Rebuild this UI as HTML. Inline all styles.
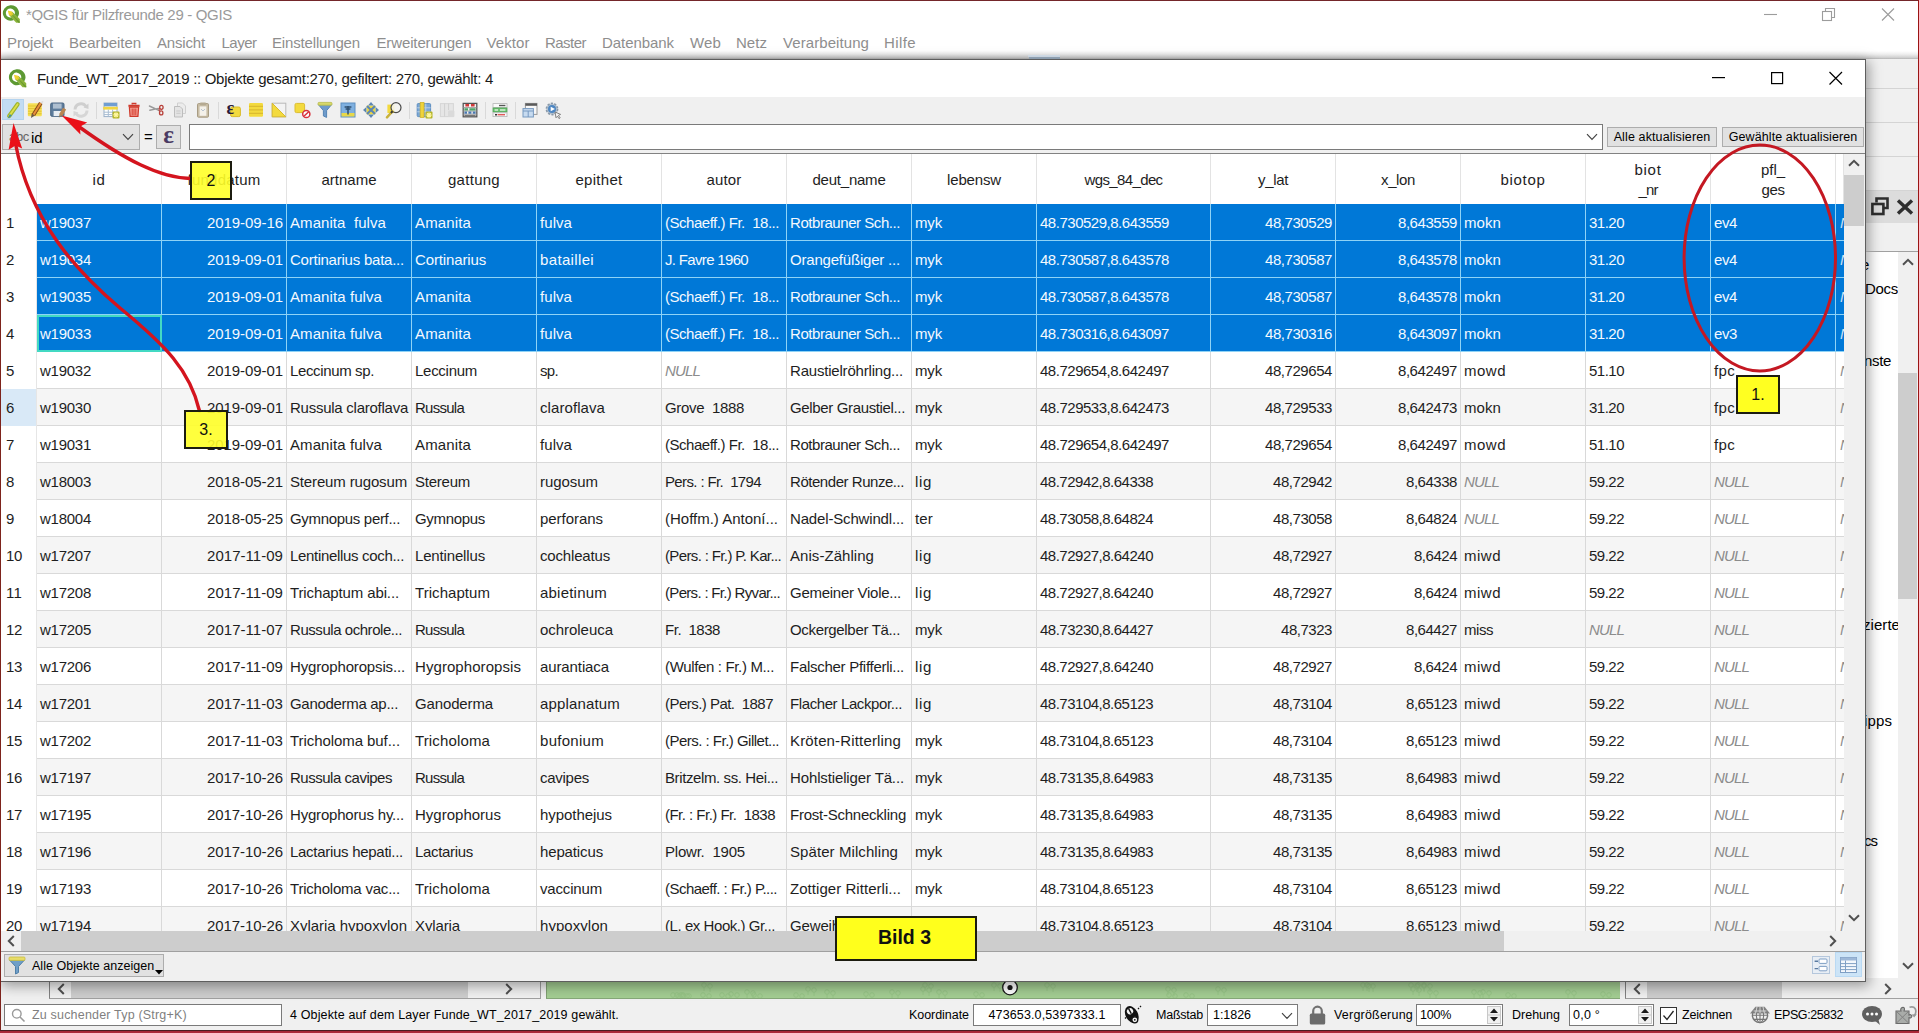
<!DOCTYPE html>
<html lang="de"><head><meta charset="utf-8"><title>QGIS Attributtabelle</title>
<style>
html,body{margin:0;padding:0}
body{width:1919px;height:1033px;position:relative;overflow:hidden;background:#fff;font-family:"Liberation Sans",sans-serif;font-size:15px;color:#000;line-height:1}
div,span{box-sizing:border-box}
.a{position:absolute}
/* main window */
#mtitle{letter-spacing:-0.320px;left:26px;top:6px;font-size:15px;color:#9a9a9a;white-space:nowrap;line-height:18px}
#menu span{position:absolute;top:34px;font-size:15px;color:#8e8e8e;white-space:nowrap;line-height:18px}
#menushadow{left:1px;top:51px;width:1917px;height:8px;background:linear-gradient(#fff,#eee 40%,#d2d2d2 80%,#b4b4b4)}
#mright{left:1866px;top:59px;width:52px;height:941px;background:#f0f0f0}
#mright .ln{left:0;width:52px;height:1px;background:#d4d4d4}
#dockhd{left:0;top:132px;width:52px;height:32px;background:#dcdcdc}
#dockpanel{left:0;top:192px;width:32px;height:727px;background:#fff;border-top:1px solid #a0a0a0;font-size:15px;overflow:hidden}
#dockpanel span{position:absolute;white-space:nowrap;line-height:18px}
#docksb{left:32px;top:193px;width:19px;height:726px;background:#f0f0f0}
#docksb .th{left:0;top:121px;width:19px;height:226px;background:#cdcdcd}
#mbottom{left:1px;top:982px;width:1917px;height:18px;background:#f0f0f0}
#lsb{left:48px;top:0;width:492px;height:17px;background:#f0f0f0;border-left:1px solid #828282;border-bottom:1px solid #a0a0a0;border-right:1px solid #a0a0a0}
#lsb .th{left:21px;top:0;width:397px;height:16px;background:#cdcdcd}
#map{left:545px;top:0;width:1074px;height:17px;background:#a3cd92;border-left:1px solid #7f9f72;border-bottom:1px solid #86a878}
#rsb{left:1624px;top:0;width:293px;height:17px;background:#f0f0f0;border-left:1px solid #828282;border-bottom:1px solid #a0a0a0}
#rsb .th{left:21px;top:0;width:135px;height:16px;background:#cdcdcd}
#status{left:1px;top:1000px;width:1917px;height:30px;background:#f0f0f0;font-size:12.500px}
#status .t{position:absolute;top:7px;line-height:16px;white-space:nowrap}
#status .box{position:absolute;top:4px;height:22px;background:#fff;border:1px solid #7a7a7a}
#status .box .t{top:2px}
#redT{left:0;top:0;width:1919px;height:1px;background:#74262a}
#redL{left:0;top:0;width:1px;height:1033px;background:#7d231c}
#redR{left:1918px;top:0;width:1px;height:1033px;background:#9a1414}
#redB{left:0;top:1030px;width:1919px;height:3px;background:linear-gradient(#4a1c20 0,#4a1c20 33%,#a42434 34%,#ae2a3a)}
/* dialog : origin (1,60) */
#dlg{left:1px;top:59px;width:1865px;height:923px;background:#f0f0f0;border:1px solid #5e5e5e;border-left:none;box-shadow:2px 3px 12px 1px rgba(0,0,0,.36)}
#dtitle{left:0;top:0;width:1864px;height:37px;background:#fff}
#dtitle .t{letter-spacing:-0.297px;left:36px;top:10px;font-size:15px;line-height:18px;white-space:nowrap;color:#1a1a1a}
#tb{left:0;top:37px;width:1864px;height:27px;background:#f0f0f0}
#tb .on{left:1px;top:2px;width:22px;height:21px;background:#c3dcf3;border:1px solid #b4d3ee}
#tb .sep{top:5px;width:1px;height:17px;background:#d9d9d9}
#tb svg{position:absolute;top:4px;width:18px;height:18px}
.btn{background:#e1e1e1;border:1px solid #adadad;font-size:12.500px;white-space:nowrap;text-align:center;color:#000}
#fcombo{left:1px;top:64px;width:138px;height:26px}
#fcombo .abc{left:6px;top:4px;font-size:13px;color:#666;line-height:15px;letter-spacing:-.3px}
#fcombo .id{left:28px;top:4px;font-size:15px;line-height:17px}
#feq{left:143px;top:69px;font-size:15px;line-height:16px}
#feps{left:155px;top:65px;width:25px;height:24px}
#feps span{position:absolute;left:0;top:-3px;width:23px;text-align:center;font-family:"Liberation Serif","DejaVu Serif",serif;font-size:25px;font-weight:bold;line-height:24px;color:#4a3a63}
#fexpr{left:188px;top:64px;width:1414px;height:26px;background:#fff;border:1px solid #7a7a7a}
#bAll{left:1606px;top:67px;width:110px;height:20px;line-height:18px}
#bSel{left:1721px;top:67px;width:142px;height:20px;line-height:18px}
#tblframe{left:0;top:93px;width:1864px;height:1px;background:#828282}
/* table (page coords left 2, top 154) */
#tbl{position:absolute;left:0;top:94px;width:1843px;height:777px;background:#fff;overflow:hidden;font-size:15px;color:#1e1e1e}
.hrow{position:absolute;left:0;top:0;width:1843px;height:50px;background:#fff}
.hc{position:absolute;top:0;height:50px;border-right:1px solid #e3e3e3;text-align:center;line-height:51px;white-space:nowrap}
.hc.two{line-height:20px;padding-top:5.500px}
.hc.corner{left:0;width:36px}
.row{position:absolute;left:0;width:1843px;height:37px;background:#fff}
.row.alt{background:#f5f5f5}
.rh{position:absolute;left:0;top:0;width:36px;height:37px;background:#fff;line-height:38px;padding-left:5px;border-right:1px solid #e6e6e6}
.rh.hov{background:#d9e9f7}
.c{position:absolute;top:0;height:37px;border-right:1px solid #d9d9d9;border-bottom:1px solid #d9d9d9;line-height:38px;padding:0 3px;white-space:nowrap;overflow:hidden}
.c.r{text-align:right}
.c.null{color:#8c8c8c;font-style:italic}
.c.last{padding:0 0 0 4px;border-right:none}
.row.sel .c{background:#0078d7;color:#f4f9fe;border-color:#8fd3f6}
.row.sel .c.null{color:#cfe3f5}
.row.sel .c.cur{border:2px solid #43d9c3;line-height:34px;padding:0 3px 0 1px}
#vsb{left:1843px;top:94px;width:21px;height:777px;background:#f0f0f0}
#vsb .th{left:1px;top:21px;width:19px;height:51px;background:#cdcdcd;margin-left:-1px;width:20px}
#hsb{left:0;top:871px;width:1843px;height:20px;background:#f0f0f0}
#hsb .th{left:20px;top:0;width:1483px;height:20px;background:#cdcdcd}
#sbcorner{left:1843px;top:871px;width:21px;height:20px;background:#f0f0f0}
#frameb{left:0;top:891px;width:1864px;height:1px;background:#a0a0a0}
#bFilter{left:3px;top:894px;width:160px;height:23px}
#bFilter .t{left:27px;top:3px;line-height:16px;font-size:12.500px}
#viewbtn{left:1834px;top:892px;width:27px;height:25px;background:#cce4f7;border:1px solid #b9d9f3}
/* annotations */
.ylab{position:absolute;background:rgba(255,255,40,.9);border:2px solid #1c1c10;text-align:center;font-family:"Liberation Sans",sans-serif;color:#111}
#anno{left:0;top:0}
</style></head>
<body>
<!-- ===== main window chrome ===== -->
<svg class="a" style="left:0.5px;top:3.5px" width="19.5" height="19.5" viewBox="0 0 19 19"><path d="M9 1.200 A7.600 7.600 0 1 0 12.600 15.700 L10.400 13 A4.400 4.400 0 1 1 13.300 10.200 L16.200 13 A7.600 7.600 0 0 0 9 1.200 Z" fill="#5d9933"/><path d="M8.200 8 L11 7.600 L18.300 14.600 L18.300 18.300 L14.800 18.300 L7.800 10.800 Z" fill="#8bb33a"/><path d="M6.600 6.400 L10.600 7.400 L12 10.400 L9.800 11.400 L7.600 10.400 Z" fill="#eed132"/><path d="M9.600 9 L18.300 17.400 L18.300 18.300 L17 18.300 Z" fill="#6a9a2e"/></svg>
<div class="a" id="mtitle">*QGIS für Pilzfreunde 29 - QGIS</div>
<svg class="a" style="left:1760px;top:4px" width="140" height="22" viewBox="0 0 140 22"><g fill="none" stroke="#9c9c9c" stroke-width="1.100"><path d="M4 10.500 H17"/><path d="M65.500 7.500 V4.500 H74.500 V13.500 H71.500"/><rect x="62.500" y="7.500" width="9" height="9"/><path d="M122 4.500 L134 16.500 M134 4.500 L122 16.500"/></g></svg>
<div id="menu">
<span style="left:7px;letter-spacing:-0.098px">Projekt</span><span style="left:69px;letter-spacing:-0.056px">Bearbeiten</span><span style="left:157px;letter-spacing:-0.170px">Ansicht</span><span style="left:221.5px;letter-spacing:-0.505px">Layer</span><span style="left:272px;letter-spacing:-0.160px">Einstellungen</span><span style="left:376.5px;letter-spacing:-0.133px">Erweiterungen</span><span style="left:486.5px;letter-spacing:0.079px">Vektor</span><span style="left:545px;letter-spacing:-0.531px">Raster</span><span style="left:602px;letter-spacing:-0.062px">Datenbank</span><span style="left:690px;letter-spacing:0.142px">Web</span><span style="left:736px;letter-spacing:0.039px">Netz</span><span style="left:783px;letter-spacing:0.077px">Verarbeitung</span><span style="left:884px;letter-spacing:0.398px">Hilfe</span>
</div>
<div class="a" id="menushadow"></div><div class="a" style="left:1028px;top:55px;width:32px;height:2px;background:#dde9f5"></div><div class="a" style="left:1029px;top:57px;width:31px;height:2px;background:#9fb3c6"></div>
<div class="a" id="mright">
<div class="a ln" style="top:29px"></div><div class="a ln" style="top:63px"></div><div class="a ln" style="top:97px"></div><div class="a ln" style="top:131px"></div>
<div class="a" id="dockhd">
<svg class="a" style="left:5px;top:6px" width="18" height="19" viewBox="0 0 18 19"><path d="M5.500 5.500 V1.500 H16.500 V11 H12.500" fill="none" stroke="#2e2e2e" stroke-width="2.600"/><rect x="1.400" y="7" width="11" height="10" fill="none" stroke="#2e2e2e" stroke-width="2.600"/></svg>
<svg class="a" style="left:30px;top:8px" width="18" height="16" viewBox="0 0 18 16"><path d="M2 1.500 L16 14.500 M16 1.500 L2 14.500" fill="none" stroke="#2e2e2e" stroke-width="3.400"/></svg>
</div>
<div class="a ln" style="top:192px;background:#a0a0a0;z-index:2"></div><div class="a" id="dockpanel"><span style="left:-5px;top:4px;letter-spacing:-0.344px">e</span><span style="left:-1px;top:28px;letter-spacing:-0.294px">Docs</span><span style="left:-2px;top:100px;letter-spacing:-0.339px">nste</span><span style="left:-3px;top:364px;letter-spacing:0.053px">zierte</span><span style="left:-2px;top:460px;letter-spacing:0.120px">ipps</span><span style="left:-2px;top:580px;letter-spacing:-1.000px">cs</span></div>
<div class="a" id="docksb"><div class="a th"></div>
<svg class="a" style="left:4px;top:6px" width="12" height="8" viewBox="0 0 12 8"><path d="M1 6.800 L6 1.800 L11 6.800" fill="none" stroke="#505050" stroke-width="2"/></svg>
<svg class="a" style="left:4px;top:710px" width="12" height="8" viewBox="0 0 12 8"><path d="M1 1.200 L6 6.200 L11 1.200" fill="none" stroke="#505050" stroke-width="2"/></svg>
</div>
</div>
<div class="a" id="mbottom">
<div class="a" id="lsb"><div class="a th"></div>
<svg class="a" style="left:7px;top:1px" width="8" height="12" viewBox="0 0 8 12"><path d="M6.800 1 L1.800 6 L6.800 11" fill="none" stroke="#505050" stroke-width="2"/></svg>
<svg class="a" style="left:455px;top:1px" width="8" height="12" viewBox="0 0 8 12"><path d="M1.200 1 L6.200 6 L1.200 11" fill="none" stroke="#505050" stroke-width="2"/></svg></div>
<div class="a" id="map">
<svg class="a" style="left:0;top:0" width="1074" height="16" viewBox="0 0 1074 16"><g fill="none" stroke="#96c486" stroke-width="1"><circle cx="671" cy="7" r="2.300"/><path d="M671 9.3 V13"/><circle cx="677" cy="8" r="2.300"/><path d="M677 10.3 V14"/><circle cx="816" cy="3" r="2.300"/><path d="M816 5.3 V9"/><circle cx="822" cy="4" r="2.300"/><path d="M822 6.3 V10"/><circle cx="156" cy="13" r="2.300"/><path d="M156 15.3 V19"/><circle cx="162" cy="14" r="2.300"/><path d="M162 16.3 V20"/><circle cx="200" cy="10" r="2.300"/><path d="M200 12.3 V16"/><circle cx="206" cy="11" r="2.300"/><path d="M206 13.3 V17"/><circle cx="126" cy="13" r="2.300"/><path d="M126 15.3 V19"/><circle cx="132" cy="14" r="2.300"/><path d="M132 16.3 V20"/><circle cx="447" cy="3" r="2.300"/><path d="M447 5.3 V9"/><circle cx="453" cy="4" r="2.300"/><path d="M453 6.3 V10"/><circle cx="184" cy="12" r="2.300"/><path d="M184 14.3 V18"/><circle cx="190" cy="13" r="2.300"/><path d="M190 15.3 V19"/><circle cx="864" cy="3" r="2.300"/><path d="M864 5.3 V9"/><circle cx="870" cy="4" r="2.300"/><path d="M870 6.3 V10"/><circle cx="500" cy="3" r="2.300"/><path d="M500 5.3 V9"/><circle cx="506" cy="4" r="2.300"/><path d="M506 6.3 V10"/><circle cx="877" cy="3" r="2.300"/><path d="M877 5.3 V9"/><circle cx="883" cy="4" r="2.300"/><path d="M883 6.3 V10"/><circle cx="261" cy="7" r="2.300"/><path d="M261 9.3 V13"/><circle cx="267" cy="8" r="2.300"/><path d="M267 10.3 V14"/><circle cx="134" cy="13" r="2.300"/><path d="M134 15.3 V19"/><circle cx="140" cy="14" r="2.300"/><path d="M140 16.3 V20"/><circle cx="820" cy="3" r="2.300"/><path d="M820 5.3 V9"/><circle cx="826" cy="4" r="2.300"/><path d="M826 6.3 V10"/><circle cx="460" cy="3" r="2.300"/><path d="M460 5.3 V9"/><circle cx="466" cy="4" r="2.300"/><path d="M466 6.3 V10"/><circle cx="280" cy="10" r="2.300"/><path d="M280 12.3 V16"/><circle cx="286" cy="11" r="2.300"/><path d="M286 13.3 V17"/><circle cx="866" cy="7" r="2.300"/><path d="M866 9.3 V13"/><circle cx="872" cy="8" r="2.300"/><path d="M872 10.3 V14"/><circle cx="249" cy="13" r="2.300"/><path d="M249 15.3 V19"/><circle cx="255" cy="14" r="2.300"/><path d="M255 16.3 V20"/><circle cx="639" cy="13" r="2.300"/><path d="M639 15.3 V19"/><circle cx="645" cy="14" r="2.300"/><path d="M645 16.3 V20"/><circle cx="378" cy="3" r="2.300"/><path d="M378 5.3 V9"/><circle cx="384" cy="4" r="2.300"/><path d="M384 6.3 V10"/><circle cx="392" cy="10" r="2.300"/><path d="M392 12.3 V16"/><circle cx="398" cy="11" r="2.300"/><path d="M398 13.3 V17"/><circle cx="207" cy="13" r="2.300"/><path d="M207 15.3 V19"/><circle cx="213" cy="14" r="2.300"/><path d="M213 16.3 V20"/><circle cx="136" cy="13" r="2.300"/><path d="M136 15.3 V19"/><circle cx="142" cy="14" r="2.300"/><path d="M142 16.3 V20"/><circle cx="130" cy="13" r="2.300"/><path d="M130 15.3 V19"/><circle cx="136" cy="14" r="2.300"/><path d="M136 16.3 V20"/><circle cx="429" cy="12" r="2.300"/><path d="M429 14.3 V18"/><circle cx="435" cy="13" r="2.300"/><path d="M435 15.3 V19"/><circle cx="883" cy="10" r="2.300"/><path d="M883 12.3 V16"/><circle cx="889" cy="11" r="2.300"/><path d="M889 13.3 V17"/><circle cx="961" cy="13" r="2.300"/><path d="M961 15.3 V19"/><circle cx="967" cy="14" r="2.300"/><path d="M967 16.3 V20"/><circle cx="936" cy="10" r="2.300"/><path d="M936 12.3 V16"/><circle cx="942" cy="11" r="2.300"/><path d="M942 13.3 V17"/><circle cx="621" cy="7" r="2.300"/><path d="M621 9.3 V13"/><circle cx="627" cy="8" r="2.300"/><path d="M627 10.3 V14"/><circle cx="376" cy="7" r="2.300"/><path d="M376 9.3 V13"/><circle cx="382" cy="8" r="2.300"/><path d="M382 10.3 V14"/><circle cx="175" cy="13" r="2.300"/><path d="M175 15.3 V19"/><circle cx="181" cy="14" r="2.300"/><path d="M181 16.3 V20"/><circle cx="622" cy="13" r="2.300"/><path d="M622 15.3 V19"/><circle cx="628" cy="14" r="2.300"/><path d="M628 16.3 V20"/><circle cx="1021" cy="10" r="2.300"/><path d="M1021 12.3 V16"/><circle cx="1027" cy="11" r="2.300"/><path d="M1027 13.3 V17"/><circle cx="927" cy="10" r="2.300"/><path d="M927 12.3 V16"/><circle cx="933" cy="11" r="2.300"/><path d="M933 13.3 V17"/><circle cx="157" cy="3" r="2.300"/><path d="M157 5.3 V9"/><circle cx="163" cy="4" r="2.300"/><path d="M163 6.3 V10"/><circle cx="1056" cy="12" r="2.300"/><path d="M1056 14.3 V18"/><circle cx="1062" cy="13" r="2.300"/><path d="M1062 15.3 V19"/><circle cx="345" cy="10" r="2.300"/><path d="M345 12.3 V16"/><circle cx="351" cy="11" r="2.300"/><path d="M351 13.3 V17"/><circle cx="319" cy="12" r="2.300"/><path d="M319 14.3 V18"/><circle cx="325" cy="13" r="2.300"/><path d="M325 15.3 V19"/><circle cx="871" cy="3" r="2.300"/><path d="M871 5.3 V9"/><circle cx="877" cy="4" r="2.300"/><path d="M877 6.3 V10"/></g>
<circle cx="463" cy="5.500" r="7.300" fill="#fff" stroke="#1a1a1a" stroke-width="1.300"/><circle cx="463" cy="5.500" r="2.600" fill="#1a1a1a"/></svg>
</div>
<div class="a" id="rsb"><div class="a th"></div>
<svg class="a" style="left:7px;top:1px" width="8" height="12" viewBox="0 0 8 12"><path d="M6.800 1 L1.800 6 L6.800 11" fill="none" stroke="#505050" stroke-width="2"/></svg>
<svg class="a" style="left:258px;top:1px" width="8" height="12" viewBox="0 0 8 12"><path d="M1.200 1 L6.200 6 L1.200 11" fill="none" stroke="#505050" stroke-width="2"/></svg></div>
</div>
<div class="a" id="status">
<div class="box" style="left:3px;width:278px"><span class="t" style="left:27px;color:#7f7f7f"><span style="letter-spacing:0.184px">Zu suchender Typ (Strg+K)</span></span>
<svg class="a" style="left:6px;top:3px" width="15" height="15" viewBox="0 0 15 15"><circle cx="5.800" cy="5.800" r="4.300" fill="none" stroke="#9a9a9a" stroke-width="1.400"/><path d="M9 9 L13.500 13.500" stroke="#9a9a9a" stroke-width="1.600"/></svg></div>
<span class="t" style="left:289px"><span style="letter-spacing:0.142px">4 Objekte auf dem Layer Funde_WT_2017_2019 gewählt.</span></span>
<span class="t" style="left:908px"><span style="letter-spacing:-0.047px">Koordinate</span></span>
<div class="box" style="left:972px;width:148px"><span class="t" style="left:0;width:146px;text-align:center"><span style="letter-spacing:0.127px">473653.0,5397333.1</span></span></div>
<span class="t" style="left:1155px"><span style="letter-spacing:-0.233px">Maßstab</span></span>
<div class="box" style="left:1206px;width:91px"><span class="t" style="left:5px"><span style="letter-spacing:-0.040px">1:1826</span></span>
<svg class="a" style="left:73px;top:7px" width="12" height="8" viewBox="0 0 12 8"><path d="M1 1.200 L6 6.300 L11 1.200" fill="none" stroke="#444" stroke-width="1.200"/></svg></div>
<span class="t" style="left:1333px"><span style="letter-spacing:0.213px">Vergrößerung</span></span>
<div class="box" style="left:1415px;width:87px"><span class="t" style="left:3px"><span style="letter-spacing:-0.243px">100%</span></span>
<svg class="a" style="left:70px;top:1px" width="14" height="18" viewBox="0 0 14 18"><rect x=".500" y=".500" width="13" height="17" fill="#f0f0f0" stroke="#c8c8c8"/><path d="M3 7 L7 2.500 L11 7 Z M3 11 L7 15.500 L11 11 Z" fill="#1a1a1a"/><path d="M1 9 H13" stroke="#c8c8c8"/></svg></div>
<span class="t" style="left:1511px"><span style="letter-spacing:0.006px">Drehung</span></span>
<div class="box" style="left:1568px;width:85px"><span class="t" style="left:3px"><span style="letter-spacing:0.230px">0,0 °</span></span>
<svg class="a" style="left:68px;top:1px" width="14" height="18" viewBox="0 0 14 18"><rect x=".500" y=".500" width="13" height="17" fill="#f0f0f0" stroke="#c8c8c8"/><path d="M3 7 L7 2.500 L11 7 Z M3 11 L7 15.500 L11 11 Z" fill="#1a1a1a"/><path d="M1 9 H13" stroke="#c8c8c8"/></svg></div>
<div class="a" style="left:1659px;top:7px;width:17px;height:17px;background:#fff;border:1px solid #333"><svg class="a" style="left:1px;top:1px" width="13" height="13" viewBox="0 0 13 13"><path d="M1.500 6.500 L5 10.500 L11.500 2" fill="none" stroke="#222" stroke-width="1.300"/></svg></div>
<span class="t" style="left:1681px"><span style="letter-spacing:-0.179px">Zeichnen</span></span>
<span class="t" style="left:1773px"><span style="letter-spacing:-0.397px">EPSG:25832</span></span>

<svg class="a" style="left:1122px;top:4px" width="20" height="21" viewBox="0 0 20 21"><g transform="rotate(-28 9 11)"><ellipse cx="9" cy="10.500" rx="6.200" ry="9" fill="#111"/><ellipse cx="9" cy="6.800" rx="3.200" ry="3" fill="#f4f4f4"/><path d="M9 3.800 V9.600" stroke="#111" stroke-width="1.400"/></g><circle cx="11.800" cy="15.800" r="3" fill="#f4f4f4" stroke="#111" stroke-width="1.300"/><circle cx="11.800" cy="15.800" r=".900" fill="#111"/><path d="M15 5 L16 4 M17 3 L18 2 M2 13.500 L3 14.500" stroke="#111" stroke-width="1.300"/></svg>
<svg class="a" style="left:1308px;top:5px" width="17" height="20" viewBox="0 0 17 20"><path d="M4.200 9 V6 A4.300 4.300 0 0 1 12.800 6 V9" fill="none" stroke="#727272" stroke-width="2.200"/><rect x=".800" y="8.600" width="15.400" height="11" rx="1.600" fill="#6c6c6c"/></svg>
<svg class="a" style="left:1748px;top:5px" width="22" height="19" viewBox="0 0 22 19"><ellipse cx="11" cy="10.200" rx="7.600" ry="7.400" fill="#f2f2f2" stroke="#767676" stroke-width="1.400"/><path d="M11 2.800 V17.600 M3.600 10.200 H18.400 M5 6 H17 M5 14.400 H17" stroke="#767676" stroke-width="1.100"/><ellipse cx="11" cy="10.200" rx="3.600" ry="7.400" fill="none" stroke="#767676" stroke-width="1.100"/><path d="M1 8.400 L6.400 1.800 H15.600 L21 8.400 Z" fill="#7c7c7c" fill-opacity=".92"/><path d="M4.600 6 H17.400 M8 2 L6.600 8.200 M14 2 L15.400 8.200 M11 2 V8.200" stroke="#e6e6e6" stroke-width=".800"/></svg>
<svg class="a" style="left:1860px;top:5px" width="22" height="21" viewBox="0 0 22 21"><ellipse cx="11" cy="9" rx="10" ry="8" fill="#606060"/><path d="M12.500 14.500 L19 20 L17 13 Z" fill="#606060"/><circle cx="6.500" cy="9" r="1.500" fill="#fff"/><circle cx="11" cy="9" r="1.500" fill="#fff"/><circle cx="15.500" cy="9" r="1.500" fill="#fff"/></svg>
<svg class="a" style="left:1893px;top:4px" width="24" height="22" viewBox="0 0 24 22"><path d="M2 7 H7 C5.500 3.500 10.500 2 10.500 5 C10.500 6 10 6.500 10 7 H15 V11 C17.500 9.500 19 13 16.500 14 C16 14 15.500 13.600 15 13.600 V19.500 H2 Z" fill="#a9aca9" stroke="#6a6a6a" stroke-width="1.100"/><path d="M2 7 L8.500 13.200 L2 19.500 M15 7 L8.500 13.200 L15 19.500" fill="none" stroke="#7c7c7c" stroke-width=".900"/><path d="M15.500 3.200 C21 1.600 23.600 6 20.500 11.600" fill="none" stroke="#9a9a9a" stroke-width="1.700"/><path d="M17.600 10.400 L20.200 13.600 L22.800 10" fill="#9a9a9a"/></svg>

</div>

<!-- ===== dialog ===== -->
<div class="a" id="dlg">
<div class="a" id="dtitle"><svg class="a" style="left:6px;top:7.5px" width="20" height="20" viewBox="0 0 19 19"><path d="M9 1.200 A7.600 7.600 0 1 0 12.600 15.700 L10.400 13 A4.400 4.400 0 1 1 13.300 10.200 L16.200 13 A7.600 7.600 0 0 0 9 1.200 Z" fill="#5d9933"/><path d="M8.200 8 L11 7.600 L18.300 14.600 L18.300 18.300 L14.800 18.300 L7.800 10.800 Z" fill="#8bb33a"/><path d="M6.600 6.400 L10.600 7.400 L12 10.400 L9.800 11.400 L7.600 10.400 Z" fill="#eed132"/><path d="M9.600 9 L18.300 17.400 L18.300 18.300 L17 18.300 Z" fill="#6a9a2e"/></svg><div class="a t">Funde_WT_2017_2019 :: Objekte gesamt:270, gefiltert: 270, gewählt: 4</div>
<svg class="a" style="left:1706px;top:8px" width="140" height="22" viewBox="0 0 140 22"><g fill="none" stroke="#000" stroke-width="1.200"><path d="M5 9.600 H18"/><rect x="64.600" y="4.600" width="11" height="11"/><path d="M122.500 4 L135 16.500 M135 4 L122.500 16.500"/></g></svg>
</div>
<div class="a" id="tb">
<div class="a on"></div>
<svg style="left:3px" viewBox="0 0 18 18"><path d="M13.600 3.200 L5.200 15" stroke="#9fb52e" stroke-width="4.200" stroke-linecap="round"/><path d="M13.600 3.200 L5.200 15" stroke="#dfe04a" stroke-width="1.800" stroke-linecap="round"/><path d="M5.900 13 L3.600 17.600 L7.800 14.800 Z" fill="#3f8fa0"/></svg>
<svg style="left:25px" viewBox="0 0 18 18"><rect x="1.800" y="2.300" width="14" height="13" rx="1" fill="#f6df55"/><path d="M2 5 H15.500 M2 7.600 H15.500 M2 10.200 H15.500 M2 12.800 H15.500" stroke="#e2c233" stroke-width="1"/><path d="M14.800 2 L7.400 14" stroke="#8a4a1a" stroke-width="4" stroke-linecap="butt"/><path d="M14.800 2 L7.400 14" stroke="#e8923a" stroke-width="2"/><path d="M5.700 12.600 L5 17 L8.900 14.600 Z" fill="#6a5a4a"/><path d="M15.500 .800 L16.800 1.800" stroke="#ddd" stroke-width="2.600"/></svg>
<svg style="left:48px" viewBox="0 0 18 18"><rect x="1.700" y="2" width="13.300" height="13.300" rx="1.300" fill="#5e7d9c" stroke="#4a6784" stroke-width="1"/><rect x="4" y="2.600" width="8.600" height="5" fill="#aebfd0"/><rect x="4.600" y="10" width="7.400" height="5" fill="#e9eef3"/><path d="M15.600 7.600 L11.600 14.200" stroke="#b98552" stroke-width="3.600"/><path d="M10.600 13.400 L9.800 16.600 L12.800 15 Z" fill="#8a7a5a"/></svg>
<svg style="left:71px" viewBox="0 0 18 18"><path d="M3 8.500 A6 6 0 0 1 14 5.500" fill="none" stroke="#cfcfcf" stroke-width="3"/><path d="M15 9.500 A6 6 0 0 1 4 12.500" fill="none" stroke="#d6d6d6" stroke-width="3"/><path d="M11.500 6.500 L16.500 2.500 L16.500 8 Z" fill="#cfcfcf"/><path d="M6.500 11.500 L1.500 15.500 L1.500 10 Z" fill="#d6d6d6"/></svg>
<svg style="left:101px" viewBox="0 0 18 18"><rect x="2" y="2" width="13" height="13.600" fill="#fff" stroke="#9ab0c8" stroke-width="1"/><rect x="2" y="2" width="13" height="3.400" fill="#6f9dd2"/><rect x="1.200" y="5.800" width="14.600" height="2.800" fill="#f2d640"/><path d="M2 11.200 H15 M2 13.600 H15 M6.300 8.600 V15.600 M10.600 8.600 V15.600" stroke="#a9bdd2" stroke-width="1"/><rect x="10.500" y="10.400" width="7" height="7" rx="1" fill="#b4b428"/><path d="M14 11.200 V16.600 M11.300 13.900 H16.700 M12.100 12 L15.900 15.800 M15.900 12 L12.100 15.800" stroke="#fff7a0" stroke-width="1.200"/></svg>
<svg style="left:124px" viewBox="0 0 18 18"><path d="M4.400 6 H13.600 L12.900 15.400 H5.100 Z" fill="#f8a79c" stroke="#cf3a2c" stroke-width="1.300"/><path d="M3.400 4.700 H14.600" stroke="#cf3a2c" stroke-width="1.900"/><path d="M7.200 3.600 V2.500 H10.800 V3.600" fill="none" stroke="#cf3a2c" stroke-width="1.300"/><path d="M7.200 7.400 V14.200 M9 7.400 V14.200 M10.800 7.400 V14.200" stroke="#d84a3c" stroke-width="1.200"/></svg>
<svg style="left:147px" viewBox="0 0 18 18"><path d="M1.400 5 L10.800 9.400 M1.800 9.200 L10.400 7.400" stroke="#9a9a9a" stroke-width="1.400" stroke-linecap="round"/><ellipse cx="13.400" cy="6.300" rx="1.700" ry="2" fill="none" stroke="#b8403a" stroke-width="1.300"/><ellipse cx="13.200" cy="11.900" rx="1.700" ry="2" fill="none" stroke="#b8403a" stroke-width="1.300"/><path d="M10.600 8.400 L12.200 7.700 M10.800 9.200 L12 10.400" stroke="#b8403a" stroke-width="1.300"/></svg>
<svg style="left:169px" viewBox="0 0 18 18"><path d="M7.500 2 H12.500 L15.500 5 V12.500 H7.500 Z" fill="#ececec" stroke="#cfcfcf" stroke-width="1"/><path d="M4.500 5.500 H10 L12.500 8 V16 H4.500 Z" fill="#e4e4e4" stroke="#bdbdbd" stroke-width="1"/><path d="M6.300 10 H10.600 M6.300 12.300 H10.600" stroke="#c9c9c9" stroke-width="1"/></svg>
<svg style="left:193px" viewBox="0 0 18 18"><rect x="3.500" y="2.600" width="11" height="13.600" rx="1" fill="#c9bea6" stroke="#a89c84" stroke-width="1"/><rect x="6" y="1.400" width="6" height="2.800" rx=".800" fill="#b5aa92"/><rect x="5.600" y="5.400" width="6.800" height="9.400" fill="#f4f1ea"/><path d="M7 8 L9 10 L11 8" fill="none" stroke="#b9c4d0" stroke-width="1"/></svg>
<svg style="left:223px" viewBox="0 0 18 18"><rect x="6.600" y="6" width="9.800" height="9.600" rx="1.600" fill="#f3da3e" stroke="#d9bb2c" stroke-width="1"/><text x="2.500" y="12.500" font-family="Liberation Serif,serif" font-size="18" font-weight="bold" fill="#2a1a3a">ε</text></svg>
<svg style="left:246px" viewBox="0 0 18 18"><rect x="2" y="2" width="14" height="13.800" rx="1.200" fill="#f3da3e"/><path d="M2 5.400 H16 M2 8.900 H16 M2 12.400 H16" stroke="#dcbc30" stroke-width="1.200"/></svg>
<svg style="left:269px" viewBox="0 0 18 18"><rect x="2.200" y="2.200" width="13.600" height="13.600" fill="#f3f3f3" stroke="#b9b9b9" stroke-width="1"/><path d="M2.200 2.200 L15.800 15.800 L2.200 15.800 Z" fill="#f3da3e" stroke="#d9bb2c" stroke-width="1"/></svg>
<svg style="left:292px" viewBox="0 0 18 18"><rect x="2" y="2.400" width="9.600" height="9.200" rx="1.400" fill="#f3da3e" stroke="#dcbc30" stroke-width="1"/><circle cx="13.300" cy="13" r="3.600" fill="#fff" stroke="#d8323c" stroke-width="1.500"/><path d="M10.900 15.300 L15.700 10.700" stroke="#d8323c" stroke-width="1.500"/></svg>
<svg style="left:315px" viewBox="0 0 18 18"><path d="M2.400 3.600 H15.600 L10.600 9.600 V16.400 L7.400 15 V9.600 Z" fill="#6e9bcb" stroke="#5585b5" stroke-width="1"/><rect x="2" y="1.400" width="14" height="2.800" rx="1" fill="#d8d86a" stroke="#b9bb4a" stroke-width=".800"/></svg>
<svg style="left:338px" viewBox="0 0 18 18"><rect x="2" y="2" width="14" height="14" fill="#7fb0e0" stroke="#5d8ec0" stroke-width="1"/><rect x="2.500" y="12" width="13" height="3.500" fill="#e8d84a"/><path d="M9 13.500 V5 M5.600 6 H12.400 M6.600 8 H11.400" stroke="#2f4f6f" stroke-width="1.500"/></svg>
<svg style="left:361px" viewBox="0 0 18 18"><rect x="4.600" y="4.600" width="8.800" height="8.800" fill="#efd93e"/><path d="M9 1 L12 4.400 H6 Z M9 17 L12 13.600 H6 Z M1 9 L4.400 6 V12 Z M17 9 L13.600 6 V12 Z" fill="#5c86b4"/><path d="M5 5 L13 13 M13 5 L5 13" stroke="#5c86b4" stroke-width="2.200"/></svg>
<svg style="left:384px" viewBox="0 0 18 18"><rect x="2.400" y="3.600" width="7" height="8.400" fill="#f3da3e"/><circle cx="11" cy="6.600" r="5" fill="#f5f5f0" fill-opacity=".85" stroke="#4a4a4a" stroke-width="1.200"/><path d="M7.400 10.400 L2 16.400" stroke="#c9b23a" stroke-width="2.400" stroke-linecap="round"/><path d="M7.600 10.200 L6 12" stroke="#3a3a3a" stroke-width="2"/></svg>
<svg style="left:414px" viewBox="0 0 18 18"><rect x="2.200" y="2.600" width="13.400" height="13" rx="1" fill="#7aa7d8" stroke="#5d8ec0" stroke-width="1"/><path d="M2.200 6.800 H15.600 M2.200 10.800 H15.600 M10.800 2.600 V15.600" stroke="#b9d0ea" stroke-width="1"/><rect x="5.200" y="1.400" width="3.800" height="15" fill="#efd33a" stroke="#d1b52c" stroke-width=".800"/><rect x="10.500" y="10.600" width="7" height="7" rx="1" fill="#b4b428"/><path d="M14 11.400 V16.800 M11.300 14.100 H16.700 M12.100 12.200 L15.900 16 M15.900 12.200 L12.100 16" stroke="#fff7a0" stroke-width="1.200"/></svg>
<svg style="left:437px" viewBox="0 0 18 18"><rect x="2.400" y="2.600" width="13" height="13" fill="#e6e6e6" stroke="#d6d6d6" stroke-width="1"/><path d="M6.600 2.600 V15.600 M10.600 2.600 V9" stroke="#d0d0d0" stroke-width="1"/><rect x="10" y="9.600" width="6.400" height="6.400" rx="1" fill="#dadada"/></svg>
<svg style="left:460px" viewBox="0 0 18 18"><rect x="2.200" y="2.400" width="13.600" height="13.400" fill="#f4f4f4" stroke="#555" stroke-width="1.300"/><path d="M2 6.600 H16 M2 10 H16 M2 13.200 H16" stroke="#8a8a8a" stroke-width=".800"/><path d="M4.400 4.300 H8 M10 4.300 H13.600" stroke="#d23a3a" stroke-width="2.400"/><path d="M3.400 8.300 H7 M8.400 8.300 H14.600" stroke="#4fa56a" stroke-width="2.200"/><path d="M3.400 11.700 H6 M7.400 11.700 H10.400 M11.800 11.700 H14.600" stroke="#4a78b0" stroke-width="2.200"/><path d="M3.400 14.600 H14.600" stroke="#777" stroke-width="1.400"/></svg>
<svg style="left:490px" viewBox="0 0 18 18"><rect x="2" y="2.600" width="14" height="3.800" fill="#fafafa" stroke="#b5b5b5" stroke-width=".800"/><path d="M8 4.500 H14.400" stroke="#555" stroke-width="1.400"/><rect x="2" y="7" width="14" height="4" fill="#6cc070" stroke="#4fa455" stroke-width=".800"/><path d="M3.600 9 H7 M9 9 H14.400" stroke="#d8f0d8" stroke-width="1.400"/><rect x="2" y="11.800" width="14" height="3.800" fill="#fafafa" stroke="#b5b5b5" stroke-width=".800"/><path d="M4 13.700 H6" stroke="#333" stroke-width="1.600"/><path d="M6.600 13.700 H14" stroke="#e05a5a" stroke-width="1.400"/></svg>
<svg style="left:520px" viewBox="0 0 18 18"><rect x="4.400" y="2.400" width="11.600" height="11" fill="#f7f7f7" stroke="#9a9a9a" stroke-width="1"/><rect x="4.400" y="2.400" width="11.600" height="2.400" fill="#5a5a5a"/><rect x="2" y="7.600" width="10.400" height="8.400" fill="#c7dbf0" stroke="#7799c0" stroke-width="1"/><path d="M2 10 H12.400 M7.200 10 V16" stroke="#7799c0" stroke-width="1"/></svg>
<svg style="left:543px" viewBox="0 0 18 18"><circle cx="8" cy="8" r="5.600" fill="#b9c6d3" stroke="#8a99a8" stroke-width="1.600" stroke-dasharray="2.200 1.300"/><circle cx="8" cy="8" r="4" fill="#4d86c2"/><path d="M6.700 5.700 L11 8 L6.700 10.300 Z" fill="#fff"/><path d="M11 11 L16.600 13.400 L14.400 14.400 L16.200 16.800 L15 17.600 L13.400 15.200 L12 16.800 Z" fill="#f4f4f4" stroke="#777" stroke-width=".900"/></svg>
<div class="a sep" style="left:95px"></div>
<div class="a sep" style="left:217px"></div>
<div class="a sep" style="left:408px"></div>
<div class="a sep" style="left:484px"></div>
<div class="a sep" style="left:514px"></div>
</div>
<div class="a btn" id="fcombo"><span class="a abc">abc</span><span class="a id">id</span>
<svg class="a" style="left:119px;top:8px" width="12" height="8" viewBox="0 0 12 8"><path d="M1 1.200 L6 6.300 L11 1.200" fill="none" stroke="#444" stroke-width="1.200"/></svg></div>
<div class="a" id="feq">=</div>
<div class="a btn" id="feps"><span>ε</span></div>
<div class="a" id="fexpr"><svg class="a" style="left:1396px;top:8px" width="12" height="8" viewBox="0 0 12 8"><path d="M1 1.200 L6 6.300 L11 1.200" fill="none" stroke="#444" stroke-width="1.200"/></svg></div>
<div class="a btn" id="bAll"><span style="letter-spacing:0.122px">Alle aktualisieren</span></div>
<div class="a btn" id="bSel"><span style="letter-spacing:0.101px">Gewählte aktualisieren</span></div>
<div class="a" id="tblframe"></div>
<div id="tbl">
<div class="hrow">
<div class="hc corner"></div>
<div class="hc" style="left:36px;width:125px;letter-spacing:0.662px">id</div>
<div class="hc" style="left:161px;width:125px;letter-spacing:0.234px">funddatum</div>
<div class="hc" style="left:286px;width:125px;letter-spacing:-0.005px">artname</div>
<div class="hc" style="left:411px;width:125px;letter-spacing:0.278px">gattung</div>
<div class="hc" style="left:536px;width:125px;letter-spacing:0.280px">epithet</div>
<div class="hc" style="left:661px;width:125px;letter-spacing:0.161px">autor</div>
<div class="hc" style="left:786px;width:125px;letter-spacing:-0.230px">deut_name</div>
<div class="hc" style="left:911px;width:125px;letter-spacing:-0.148px">lebensw</div>
<div class="hc" style="left:1036px;width:174px;letter-spacing:-0.624px">wgs_84_dec</div>
<div class="hc" style="left:1210px;width:125px;letter-spacing:-0.338px">y_lat</div>
<div class="hc" style="left:1335px;width:125px;letter-spacing:-0.373px">x_lon</div>
<div class="hc" style="left:1460px;width:125px;letter-spacing:0.688px">biotop</div>
<div class="hc two" style="left:1585px;width:125px"><span style="letter-spacing:0.703px">biot</span><br><span style="letter-spacing:-0.895px">_nr</span></div>
<div class="hc two" style="left:1710px;width:125px"><span style="letter-spacing:-0.047px">pfl_</span><br><span style="letter-spacing:-0.396px">ges</span></div>
<div class="hc" style="left:1835px;width:8px"></div>
</div>
<div class="row sel" style="top:50px">
<div class="rh" style="letter-spacing:-0.344px">1</div>
<div class="c" style="left:36px;width:125px;letter-spacing:-0.258px">w19037</div>
<div class="c r" style="left:161px;width:125px;letter-spacing:-0.074px">2019-09-16</div>
<div class="c" style="left:286px;width:125px;letter-spacing:0.068px">Amanita&nbsp; fulva</div>
<div class="c" style="left:411px;width:125px;letter-spacing:0.138px">Amanita</div>
<div class="c" style="left:536px;width:125px;letter-spacing:0.062px">fulva</div>
<div class="c" style="left:661px;width:125px;letter-spacing:-0.474px">(Schaeff.) Fr.&nbsp; 18...</div>
<div class="c" style="left:786px;width:125px;letter-spacing:-0.446px">Rotbrauner Sch...</div>
<div class="c" style="left:911px;width:125px;letter-spacing:-0.165px">myk</div>
<div class="c" style="left:1036px;width:174px;letter-spacing:-0.481px">48.730529,8.643559</div>
<div class="c r" style="left:1210px;width:125px;letter-spacing:-0.435px">48,730529</div>
<div class="c r" style="left:1335px;width:125px;letter-spacing:-0.447px">8,643559</div>
<div class="c" style="left:1460px;width:125px;letter-spacing:0.079px">mokn</div>
<div class="c" style="left:1585px;width:125px;letter-spacing:-0.509px">31.20</div>
<div class="c" style="left:1710px;width:125px;letter-spacing:-0.396px">ev4</div>
<div class="c null last" style="left:1835px;width:8px">NULL</div>
</div>
<div class="row sel" style="top:87px">
<div class="rh" style="letter-spacing:-0.344px">2</div>
<div class="c" style="left:36px;width:125px;letter-spacing:-0.258px">w19034</div>
<div class="c r" style="left:161px;width:125px;letter-spacing:-0.074px">2019-09-01</div>
<div class="c" style="left:286px;width:125px;letter-spacing:-0.232px">Cortinarius bata...</div>
<div class="c" style="left:411px;width:125px;letter-spacing:-0.139px">Cortinarius</div>
<div class="c" style="left:536px;width:125px;letter-spacing:0.348px">bataillei</div>
<div class="c" style="left:661px;width:125px;letter-spacing:-0.671px">J. Favre 1960</div>
<div class="c" style="left:786px;width:125px;letter-spacing:-0.200px">Orangefüßiger ...</div>
<div class="c" style="left:911px;width:125px;letter-spacing:-0.165px">myk</div>
<div class="c" style="left:1036px;width:174px;letter-spacing:-0.481px">48.730587,8.643578</div>
<div class="c r" style="left:1210px;width:125px;letter-spacing:-0.435px">48,730587</div>
<div class="c r" style="left:1335px;width:125px;letter-spacing:-0.447px">8,643578</div>
<div class="c" style="left:1460px;width:125px;letter-spacing:0.079px">mokn</div>
<div class="c" style="left:1585px;width:125px;letter-spacing:-0.509px">31.20</div>
<div class="c" style="left:1710px;width:125px;letter-spacing:-0.396px">ev4</div>
<div class="c null last" style="left:1835px;width:8px">NULL</div>
</div>
<div class="row sel" style="top:124px">
<div class="rh" style="letter-spacing:-0.344px">3</div>
<div class="c" style="left:36px;width:125px;letter-spacing:-0.258px">w19035</div>
<div class="c r" style="left:161px;width:125px;letter-spacing:-0.074px">2019-09-01</div>
<div class="c" style="left:286px;width:125px;letter-spacing:0.086px">Amanita fulva</div>
<div class="c" style="left:411px;width:125px;letter-spacing:0.138px">Amanita</div>
<div class="c" style="left:536px;width:125px;letter-spacing:0.062px">fulva</div>
<div class="c" style="left:661px;width:125px;letter-spacing:-0.474px">(Schaeff.) Fr.&nbsp; 18...</div>
<div class="c" style="left:786px;width:125px;letter-spacing:-0.446px">Rotbrauner Sch...</div>
<div class="c" style="left:911px;width:125px;letter-spacing:-0.165px">myk</div>
<div class="c" style="left:1036px;width:174px;letter-spacing:-0.481px">48.730587,8.643578</div>
<div class="c r" style="left:1210px;width:125px;letter-spacing:-0.435px">48,730587</div>
<div class="c r" style="left:1335px;width:125px;letter-spacing:-0.447px">8,643578</div>
<div class="c" style="left:1460px;width:125px;letter-spacing:0.079px">mokn</div>
<div class="c" style="left:1585px;width:125px;letter-spacing:-0.509px">31.20</div>
<div class="c" style="left:1710px;width:125px;letter-spacing:-0.396px">ev4</div>
<div class="c null last" style="left:1835px;width:8px">NULL</div>
</div>
<div class="row sel" style="top:161px">
<div class="rh" style="letter-spacing:-0.344px">4</div>
<div class="c cur" style="left:36px;width:125px;letter-spacing:-0.258px">w19033</div>
<div class="c r" style="left:161px;width:125px;letter-spacing:-0.074px">2019-09-01</div>
<div class="c" style="left:286px;width:125px;letter-spacing:0.086px">Amanita fulva</div>
<div class="c" style="left:411px;width:125px;letter-spacing:0.138px">Amanita</div>
<div class="c" style="left:536px;width:125px;letter-spacing:0.062px">fulva</div>
<div class="c" style="left:661px;width:125px;letter-spacing:-0.474px">(Schaeff.) Fr.&nbsp; 18...</div>
<div class="c" style="left:786px;width:125px;letter-spacing:-0.446px">Rotbrauner Sch...</div>
<div class="c" style="left:911px;width:125px;letter-spacing:-0.165px">myk</div>
<div class="c" style="left:1036px;width:174px;letter-spacing:-0.481px">48.730316,8.643097</div>
<div class="c r" style="left:1210px;width:125px;letter-spacing:-0.435px">48,730316</div>
<div class="c r" style="left:1335px;width:125px;letter-spacing:-0.447px">8,643097</div>
<div class="c" style="left:1460px;width:125px;letter-spacing:0.079px">mokn</div>
<div class="c" style="left:1585px;width:125px;letter-spacing:-0.509px">31.20</div>
<div class="c" style="left:1710px;width:125px;letter-spacing:-0.396px">ev3</div>
<div class="c null last" style="left:1835px;width:8px">NULL</div>
</div>
<div class="row" style="top:198px">
<div class="rh" style="letter-spacing:-0.344px">5</div>
<div class="c" style="left:36px;width:125px;letter-spacing:-0.258px">w19032</div>
<div class="c r" style="left:161px;width:125px;letter-spacing:-0.074px">2019-09-01</div>
<div class="c" style="left:286px;width:125px;letter-spacing:-0.365px">Leccinum sp.</div>
<div class="c" style="left:411px;width:125px;letter-spacing:-0.275px">Leccinum</div>
<div class="c" style="left:536px;width:125px;letter-spacing:-0.671px">sp.</div>
<div class="c null" style="left:661px;width:125px;letter-spacing:-0.838px">NULL</div>
<div class="c" style="left:786px;width:125px;letter-spacing:-0.196px">Raustielröhrling...</div>
<div class="c" style="left:911px;width:125px;letter-spacing:-0.165px">myk</div>
<div class="c" style="left:1036px;width:174px;letter-spacing:-0.481px">48.729654,8.642497</div>
<div class="c r" style="left:1210px;width:125px;letter-spacing:-0.435px">48,729654</div>
<div class="c r" style="left:1335px;width:125px;letter-spacing:-0.447px">8,642497</div>
<div class="c" style="left:1460px;width:125px;letter-spacing:0.496px">mowd</div>
<div class="c" style="left:1585px;width:125px;letter-spacing:-0.509px">51.10</div>
<div class="c" style="left:1710px;width:125px;letter-spacing:0.329px">fpc</div>
<div class="c null last" style="left:1835px;width:8px">NULL</div>
</div>
<div class="row alt" style="top:235px">
<div class="rh hov" style="letter-spacing:-0.344px">6</div>
<div class="c" style="left:36px;width:125px;letter-spacing:-0.258px">w19030</div>
<div class="c r" style="left:161px;width:125px;letter-spacing:-0.074px">2019-09-01</div>
<div class="c" style="left:286px;width:125px;letter-spacing:-0.254px">Russula claroflava</div>
<div class="c" style="left:411px;width:125px;letter-spacing:-0.742px">Russula</div>
<div class="c" style="left:536px;width:125px;letter-spacing:0.080px">claroflava</div>
<div class="c" style="left:661px;width:125px;letter-spacing:-0.324px">Grove&nbsp; 1888</div>
<div class="c" style="left:786px;width:125px;letter-spacing:-0.354px">Gelber Graustiel...</div>
<div class="c" style="left:911px;width:125px;letter-spacing:-0.165px">myk</div>
<div class="c" style="left:1036px;width:174px;letter-spacing:-0.481px">48.729533,8.642473</div>
<div class="c r" style="left:1210px;width:125px;letter-spacing:-0.435px">48,729533</div>
<div class="c r" style="left:1335px;width:125px;letter-spacing:-0.447px">8,642473</div>
<div class="c" style="left:1460px;width:125px;letter-spacing:0.079px">mokn</div>
<div class="c" style="left:1585px;width:125px;letter-spacing:-0.509px">31.20</div>
<div class="c" style="left:1710px;width:125px;letter-spacing:0.329px">fpc</div>
<div class="c null last" style="left:1835px;width:8px">NULL</div>
</div>
<div class="row" style="top:272px">
<div class="rh" style="letter-spacing:-0.344px">7</div>
<div class="c" style="left:36px;width:125px;letter-spacing:-0.258px">w19031</div>
<div class="c r" style="left:161px;width:125px;letter-spacing:-0.074px">2019-09-01</div>
<div class="c" style="left:286px;width:125px;letter-spacing:0.086px">Amanita fulva</div>
<div class="c" style="left:411px;width:125px;letter-spacing:0.138px">Amanita</div>
<div class="c" style="left:536px;width:125px;letter-spacing:0.062px">fulva</div>
<div class="c" style="left:661px;width:125px;letter-spacing:-0.474px">(Schaeff.) Fr.&nbsp; 18...</div>
<div class="c" style="left:786px;width:125px;letter-spacing:-0.446px">Rotbrauner Sch...</div>
<div class="c" style="left:911px;width:125px;letter-spacing:-0.165px">myk</div>
<div class="c" style="left:1036px;width:174px;letter-spacing:-0.481px">48.729654,8.642497</div>
<div class="c r" style="left:1210px;width:125px;letter-spacing:-0.435px">48,729654</div>
<div class="c r" style="left:1335px;width:125px;letter-spacing:-0.447px">8,642497</div>
<div class="c" style="left:1460px;width:125px;letter-spacing:0.496px">mowd</div>
<div class="c" style="left:1585px;width:125px;letter-spacing:-0.509px">51.10</div>
<div class="c" style="left:1710px;width:125px;letter-spacing:0.329px">fpc</div>
<div class="c null last" style="left:1835px;width:8px">NULL</div>
</div>
<div class="row alt" style="top:309px">
<div class="rh" style="letter-spacing:-0.344px">8</div>
<div class="c" style="left:36px;width:125px;letter-spacing:-0.258px">w18003</div>
<div class="c r" style="left:161px;width:125px;letter-spacing:-0.074px">2018-05-21</div>
<div class="c" style="left:286px;width:125px;letter-spacing:-0.149px">Stereum rugosum</div>
<div class="c" style="left:411px;width:125px;letter-spacing:-0.242px">Stereum</div>
<div class="c" style="left:536px;width:125px;letter-spacing:-0.052px">rugosum</div>
<div class="c" style="left:661px;width:125px;letter-spacing:-0.631px">Pers. : Fr.&nbsp; 1794</div>
<div class="c" style="left:786px;width:125px;letter-spacing:-0.456px">Rötender Runze...</div>
<div class="c" style="left:911px;width:125px;letter-spacing:0.664px">lig</div>
<div class="c" style="left:1036px;width:174px;letter-spacing:-0.498px">48.72942,8.64338</div>
<div class="c r" style="left:1210px;width:125px;letter-spacing:-0.447px">48,72942</div>
<div class="c r" style="left:1335px;width:125px;letter-spacing:-0.461px">8,64338</div>
<div class="c null" style="left:1460px;width:125px;letter-spacing:-0.838px">NULL</div>
<div class="c" style="left:1585px;width:125px;letter-spacing:-0.509px">59.22</div>
<div class="c null" style="left:1710px;width:125px;letter-spacing:-0.838px">NULL</div>
<div class="c null last" style="left:1835px;width:8px">NULL</div>
</div>
<div class="row" style="top:346px">
<div class="rh" style="letter-spacing:-0.344px">9</div>
<div class="c" style="left:36px;width:125px;letter-spacing:-0.258px">w18004</div>
<div class="c r" style="left:161px;width:125px;letter-spacing:-0.074px">2018-05-25</div>
<div class="c" style="left:286px;width:125px;letter-spacing:-0.316px">Gymnopus perf...</div>
<div class="c" style="left:411px;width:125px;letter-spacing:-0.317px">Gymnopus</div>
<div class="c" style="left:536px;width:125px;letter-spacing:-0.042px">perforans</div>
<div class="c" style="left:661px;width:125px;letter-spacing:-0.006px">(Hoffm.) Antoní...</div>
<div class="c" style="left:786px;width:125px;letter-spacing:-0.160px">Nadel-Schwindl...</div>
<div class="c" style="left:911px;width:125px;letter-spacing:0.164px">ter</div>
<div class="c" style="left:1036px;width:174px;letter-spacing:-0.498px">48.73058,8.64824</div>
<div class="c r" style="left:1210px;width:125px;letter-spacing:-0.447px">48,73058</div>
<div class="c r" style="left:1335px;width:125px;letter-spacing:-0.461px">8,64824</div>
<div class="c null" style="left:1460px;width:125px;letter-spacing:-0.838px">NULL</div>
<div class="c" style="left:1585px;width:125px;letter-spacing:-0.509px">59.22</div>
<div class="c null" style="left:1710px;width:125px;letter-spacing:-0.838px">NULL</div>
<div class="c null last" style="left:1835px;width:8px">NULL</div>
</div>
<div class="row alt" style="top:383px">
<div class="rh" style="letter-spacing:-0.344px">10</div>
<div class="c" style="left:36px;width:125px;letter-spacing:-0.258px">w17207</div>
<div class="c r" style="left:161px;width:125px;letter-spacing:0.037px">2017-11-09</div>
<div class="c" style="left:286px;width:125px;letter-spacing:-0.320px">Lentinellus coch...</div>
<div class="c" style="left:411px;width:125px;letter-spacing:-0.157px">Lentinellus</div>
<div class="c" style="left:536px;width:125px;letter-spacing:-0.172px">cochleatus</div>
<div class="c" style="left:661px;width:125px;letter-spacing:-0.635px">(Pers. : Fr.) P. Kar...</div>
<div class="c" style="left:786px;width:125px;letter-spacing:0.052px">Anis-Zähling</div>
<div class="c" style="left:911px;width:125px;letter-spacing:0.664px">lig</div>
<div class="c" style="left:1036px;width:174px;letter-spacing:-0.498px">48.72927,8.64240</div>
<div class="c r" style="left:1210px;width:125px;letter-spacing:-0.447px">48,72927</div>
<div class="c r" style="left:1335px;width:125px;letter-spacing:-0.481px">8,6424</div>
<div class="c" style="left:1460px;width:125px;letter-spacing:0.499px">miwd</div>
<div class="c" style="left:1585px;width:125px;letter-spacing:-0.509px">59.22</div>
<div class="c null" style="left:1710px;width:125px;letter-spacing:-0.838px">NULL</div>
<div class="c null last" style="left:1835px;width:8px">NULL</div>
</div>
<div class="row" style="top:420px">
<div class="rh" style="letter-spacing:0.213px">11</div>
<div class="c" style="left:36px;width:125px;letter-spacing:-0.258px">w17208</div>
<div class="c r" style="left:161px;width:125px;letter-spacing:0.037px">2017-11-09</div>
<div class="c" style="left:286px;width:125px;letter-spacing:-0.128px">Trichaptum abi...</div>
<div class="c" style="left:411px;width:125px;letter-spacing:0.052px">Trichaptum</div>
<div class="c" style="left:536px;width:125px;letter-spacing:0.217px">abietinum</div>
<div class="c" style="left:661px;width:125px;letter-spacing:-0.683px">(Pers. : Fr.) Ryvar...</div>
<div class="c" style="left:786px;width:125px;letter-spacing:-0.272px">Gemeiner Viole...</div>
<div class="c" style="left:911px;width:125px;letter-spacing:0.664px">lig</div>
<div class="c" style="left:1036px;width:174px;letter-spacing:-0.498px">48.72927,8.64240</div>
<div class="c r" style="left:1210px;width:125px;letter-spacing:-0.447px">48,72927</div>
<div class="c r" style="left:1335px;width:125px;letter-spacing:-0.481px">8,6424</div>
<div class="c" style="left:1460px;width:125px;letter-spacing:0.499px">miwd</div>
<div class="c" style="left:1585px;width:125px;letter-spacing:-0.509px">59.22</div>
<div class="c null" style="left:1710px;width:125px;letter-spacing:-0.838px">NULL</div>
<div class="c null last" style="left:1835px;width:8px">NULL</div>
</div>
<div class="row alt" style="top:457px">
<div class="rh" style="letter-spacing:-0.344px">12</div>
<div class="c" style="left:36px;width:125px;letter-spacing:-0.258px">w17205</div>
<div class="c r" style="left:161px;width:125px;letter-spacing:0.037px">2017-11-07</div>
<div class="c" style="left:286px;width:125px;letter-spacing:-0.448px">Russula ochrole...</div>
<div class="c" style="left:411px;width:125px;letter-spacing:-0.742px">Russula</div>
<div class="c" style="left:536px;width:125px;letter-spacing:-0.039px">ochroleuca</div>
<div class="c" style="left:661px;width:125px;letter-spacing:-0.468px">Fr.&nbsp; 1838</div>
<div class="c" style="left:786px;width:125px;letter-spacing:-0.331px">Ockergelber Tä...</div>
<div class="c" style="left:911px;width:125px;letter-spacing:-0.165px">myk</div>
<div class="c" style="left:1036px;width:174px;letter-spacing:-0.498px">48.73230,8.64427</div>
<div class="c r" style="left:1210px;width:125px;letter-spacing:-0.461px">48,7323</div>
<div class="c r" style="left:1335px;width:125px;letter-spacing:-0.461px">8,64427</div>
<div class="c" style="left:1460px;width:125px;letter-spacing:-0.457px">miss</div>
<div class="c null" style="left:1585px;width:125px;letter-spacing:-0.838px">NULL</div>
<div class="c null" style="left:1710px;width:125px;letter-spacing:-0.838px">NULL</div>
<div class="c null last" style="left:1835px;width:8px">NULL</div>
</div>
<div class="row" style="top:494px">
<div class="rh" style="letter-spacing:-0.344px">13</div>
<div class="c" style="left:36px;width:125px;letter-spacing:-0.258px">w17206</div>
<div class="c r" style="left:161px;width:125px;letter-spacing:0.037px">2017-11-09</div>
<div class="c" style="left:286px;width:125px;letter-spacing:-0.151px">Hygrophoropsis...</div>
<div class="c" style="left:411px;width:125px;letter-spacing:0.067px">Hygrophoropsis</div>
<div class="c" style="left:536px;width:125px;letter-spacing:-0.106px">aurantiaca</div>
<div class="c" style="left:661px;width:125px;letter-spacing:-0.346px">(Wulfen : Fr.) M...</div>
<div class="c" style="left:786px;width:125px;letter-spacing:-0.275px">Falscher Pfifferli...</div>
<div class="c" style="left:911px;width:125px;letter-spacing:0.664px">lig</div>
<div class="c" style="left:1036px;width:174px;letter-spacing:-0.498px">48.72927,8.64240</div>
<div class="c r" style="left:1210px;width:125px;letter-spacing:-0.447px">48,72927</div>
<div class="c r" style="left:1335px;width:125px;letter-spacing:-0.481px">8,6424</div>
<div class="c" style="left:1460px;width:125px;letter-spacing:0.499px">miwd</div>
<div class="c" style="left:1585px;width:125px;letter-spacing:-0.509px">59.22</div>
<div class="c null" style="left:1710px;width:125px;letter-spacing:-0.838px">NULL</div>
<div class="c null last" style="left:1835px;width:8px">NULL</div>
</div>
<div class="row alt" style="top:531px">
<div class="rh" style="letter-spacing:-0.344px">14</div>
<div class="c" style="left:36px;width:125px;letter-spacing:-0.258px">w17201</div>
<div class="c r" style="left:161px;width:125px;letter-spacing:0.037px">2017-11-03</div>
<div class="c" style="left:286px;width:125px;letter-spacing:-0.305px">Ganoderma ap...</div>
<div class="c" style="left:411px;width:125px;letter-spacing:-0.136px">Ganoderma</div>
<div class="c" style="left:536px;width:125px;letter-spacing:0.160px">applanatum</div>
<div class="c" style="left:661px;width:125px;letter-spacing:-0.531px">(Pers.) Pat.&nbsp; 1887</div>
<div class="c" style="left:786px;width:125px;letter-spacing:-0.402px">Flacher Lackpor...</div>
<div class="c" style="left:911px;width:125px;letter-spacing:0.664px">lig</div>
<div class="c" style="left:1036px;width:174px;letter-spacing:-0.498px">48.73104,8.65123</div>
<div class="c r" style="left:1210px;width:125px;letter-spacing:-0.447px">48,73104</div>
<div class="c r" style="left:1335px;width:125px;letter-spacing:-0.461px">8,65123</div>
<div class="c" style="left:1460px;width:125px;letter-spacing:0.499px">miwd</div>
<div class="c" style="left:1585px;width:125px;letter-spacing:-0.509px">59.22</div>
<div class="c null" style="left:1710px;width:125px;letter-spacing:-0.838px">NULL</div>
<div class="c null last" style="left:1835px;width:8px">NULL</div>
</div>
<div class="row" style="top:568px">
<div class="rh" style="letter-spacing:-0.344px">15</div>
<div class="c" style="left:36px;width:125px;letter-spacing:-0.258px">w17202</div>
<div class="c r" style="left:161px;width:125px;letter-spacing:0.037px">2017-11-03</div>
<div class="c" style="left:286px;width:125px;letter-spacing:-0.069px">Tricholoma buf...</div>
<div class="c" style="left:411px;width:125px;letter-spacing:0.136px">Tricholoma</div>
<div class="c" style="left:536px;width:125px;letter-spacing:0.286px">bufonium</div>
<div class="c" style="left:661px;width:125px;letter-spacing:-0.515px">(Pers. : Fr.) Gillet...</div>
<div class="c" style="left:786px;width:125px;letter-spacing:0.154px">Kröten-Ritterling</div>
<div class="c" style="left:911px;width:125px;letter-spacing:-0.165px">myk</div>
<div class="c" style="left:1036px;width:174px;letter-spacing:-0.498px">48.73104,8.65123</div>
<div class="c r" style="left:1210px;width:125px;letter-spacing:-0.447px">48,73104</div>
<div class="c r" style="left:1335px;width:125px;letter-spacing:-0.461px">8,65123</div>
<div class="c" style="left:1460px;width:125px;letter-spacing:0.499px">miwd</div>
<div class="c" style="left:1585px;width:125px;letter-spacing:-0.509px">59.22</div>
<div class="c null" style="left:1710px;width:125px;letter-spacing:-0.838px">NULL</div>
<div class="c null last" style="left:1835px;width:8px">NULL</div>
</div>
<div class="row alt" style="top:605px">
<div class="rh" style="letter-spacing:-0.344px">16</div>
<div class="c" style="left:36px;width:125px;letter-spacing:-0.258px">w17197</div>
<div class="c r" style="left:161px;width:125px;letter-spacing:-0.074px">2017-10-26</div>
<div class="c" style="left:286px;width:125px;letter-spacing:-0.482px">Russula cavipes</div>
<div class="c" style="left:411px;width:125px;letter-spacing:-0.742px">Russula</div>
<div class="c" style="left:536px;width:125px;letter-spacing:-0.266px">cavipes</div>
<div class="c" style="left:661px;width:125px;letter-spacing:-0.393px">Britzelm. ss. Hei...</div>
<div class="c" style="left:786px;width:125px;letter-spacing:-0.129px">Hohlstieliger Tä...</div>
<div class="c" style="left:911px;width:125px;letter-spacing:-0.165px">myk</div>
<div class="c" style="left:1036px;width:174px;letter-spacing:-0.498px">48.73135,8.64983</div>
<div class="c r" style="left:1210px;width:125px;letter-spacing:-0.447px">48,73135</div>
<div class="c r" style="left:1335px;width:125px;letter-spacing:-0.461px">8,64983</div>
<div class="c" style="left:1460px;width:125px;letter-spacing:0.499px">miwd</div>
<div class="c" style="left:1585px;width:125px;letter-spacing:-0.509px">59.22</div>
<div class="c null" style="left:1710px;width:125px;letter-spacing:-0.838px">NULL</div>
<div class="c null last" style="left:1835px;width:8px">NULL</div>
</div>
<div class="row" style="top:642px">
<div class="rh" style="letter-spacing:-0.344px">17</div>
<div class="c" style="left:36px;width:125px;letter-spacing:-0.258px">w17195</div>
<div class="c r" style="left:161px;width:125px;letter-spacing:-0.074px">2017-10-26</div>
<div class="c" style="left:286px;width:125px;letter-spacing:-0.193px">Hygrophorus hy...</div>
<div class="c" style="left:411px;width:125px;letter-spacing:0.010px">Hygrophorus</div>
<div class="c" style="left:536px;width:125px;letter-spacing:-0.056px">hypothejus</div>
<div class="c" style="left:661px;width:125px;letter-spacing:-0.518px">(Fr. : Fr.) Fr.&nbsp; 1838</div>
<div class="c" style="left:786px;width:125px;letter-spacing:-0.239px">Frost-Schneckling</div>
<div class="c" style="left:911px;width:125px;letter-spacing:-0.165px">myk</div>
<div class="c" style="left:1036px;width:174px;letter-spacing:-0.498px">48.73135,8.64983</div>
<div class="c r" style="left:1210px;width:125px;letter-spacing:-0.447px">48,73135</div>
<div class="c r" style="left:1335px;width:125px;letter-spacing:-0.461px">8,64983</div>
<div class="c" style="left:1460px;width:125px;letter-spacing:0.499px">miwd</div>
<div class="c" style="left:1585px;width:125px;letter-spacing:-0.509px">59.22</div>
<div class="c null" style="left:1710px;width:125px;letter-spacing:-0.838px">NULL</div>
<div class="c null last" style="left:1835px;width:8px">NULL</div>
</div>
<div class="row alt" style="top:679px">
<div class="rh" style="letter-spacing:-0.344px">18</div>
<div class="c" style="left:36px;width:125px;letter-spacing:-0.258px">w17196</div>
<div class="c r" style="left:161px;width:125px;letter-spacing:-0.074px">2017-10-26</div>
<div class="c" style="left:286px;width:125px;letter-spacing:-0.285px">Lactarius hepati...</div>
<div class="c" style="left:411px;width:125px;letter-spacing:-0.319px">Lactarius</div>
<div class="c" style="left:536px;width:125px;letter-spacing:-0.135px">hepaticus</div>
<div class="c" style="left:661px;width:125px;letter-spacing:-0.213px">Plowr.&nbsp; 1905</div>
<div class="c" style="left:786px;width:125px;letter-spacing:0.080px">Später Milchling</div>
<div class="c" style="left:911px;width:125px;letter-spacing:-0.165px">myk</div>
<div class="c" style="left:1036px;width:174px;letter-spacing:-0.498px">48.73135,8.64983</div>
<div class="c r" style="left:1210px;width:125px;letter-spacing:-0.447px">48,73135</div>
<div class="c r" style="left:1335px;width:125px;letter-spacing:-0.461px">8,64983</div>
<div class="c" style="left:1460px;width:125px;letter-spacing:0.499px">miwd</div>
<div class="c" style="left:1585px;width:125px;letter-spacing:-0.509px">59.22</div>
<div class="c null" style="left:1710px;width:125px;letter-spacing:-0.838px">NULL</div>
<div class="c null last" style="left:1835px;width:8px">NULL</div>
</div>
<div class="row" style="top:716px">
<div class="rh" style="letter-spacing:-0.344px">19</div>
<div class="c" style="left:36px;width:125px;letter-spacing:-0.258px">w17193</div>
<div class="c r" style="left:161px;width:125px;letter-spacing:-0.074px">2017-10-26</div>
<div class="c" style="left:286px;width:125px;letter-spacing:-0.215px">Tricholoma vac...</div>
<div class="c" style="left:411px;width:125px;letter-spacing:0.136px">Tricholoma</div>
<div class="c" style="left:536px;width:125px;letter-spacing:-0.170px">vaccinum</div>
<div class="c" style="left:661px;width:125px;letter-spacing:-0.531px">(Schaeff. : Fr.) P....</div>
<div class="c" style="left:786px;width:125px;letter-spacing:0.048px">Zottiger Ritterli...</div>
<div class="c" style="left:911px;width:125px;letter-spacing:-0.165px">myk</div>
<div class="c" style="left:1036px;width:174px;letter-spacing:-0.498px">48.73104,8.65123</div>
<div class="c r" style="left:1210px;width:125px;letter-spacing:-0.447px">48,73104</div>
<div class="c r" style="left:1335px;width:125px;letter-spacing:-0.461px">8,65123</div>
<div class="c" style="left:1460px;width:125px;letter-spacing:0.499px">miwd</div>
<div class="c" style="left:1585px;width:125px;letter-spacing:-0.509px">59.22</div>
<div class="c null" style="left:1710px;width:125px;letter-spacing:-0.838px">NULL</div>
<div class="c null last" style="left:1835px;width:8px">NULL</div>
</div>
<div class="row alt" style="top:753px">
<div class="rh" style="letter-spacing:-0.344px">20</div>
<div class="c" style="left:36px;width:125px;letter-spacing:-0.258px">w17194</div>
<div class="c r" style="left:161px;width:125px;letter-spacing:-0.074px">2017-10-26</div>
<div class="c" style="left:286px;width:125px;letter-spacing:-0.034px">Xylaria hypoxylon</div>
<div class="c" style="left:411px;width:125px;letter-spacing:-0.122px">Xylaria</div>
<div class="c" style="left:536px;width:125px;letter-spacing:0.050px">hypoxylon</div>
<div class="c" style="left:661px;width:125px;letter-spacing:-0.441px">(L. ex Hook.) Gr...</div>
<div class="c" style="left:786px;width:125px;letter-spacing:-0.149px">Geweihförmige...</div>
<div class="c" style="left:911px;width:125px;letter-spacing:0.664px">lig</div>
<div class="c" style="left:1036px;width:174px;letter-spacing:-0.498px">48.73104,8.65123</div>
<div class="c r" style="left:1210px;width:125px;letter-spacing:-0.447px">48,73104</div>
<div class="c r" style="left:1335px;width:125px;letter-spacing:-0.461px">8,65123</div>
<div class="c" style="left:1460px;width:125px;letter-spacing:0.499px">miwd</div>
<div class="c" style="left:1585px;width:125px;letter-spacing:-0.509px">59.22</div>
<div class="c null" style="left:1710px;width:125px;letter-spacing:-0.838px">NULL</div>
<div class="c null last" style="left:1835px;width:8px">NULL</div>
</div>
</div>
<div class="a" id="vsb"><div class="a th"></div>
<svg class="a" style="left:4px;top:5px" width="12" height="8" viewBox="0 0 12 8"><path d="M1 6.800 L6 1.800 L11 6.800" fill="none" stroke="#505050" stroke-width="2"/></svg>
<svg class="a" style="left:4px;top:760px" width="12" height="8" viewBox="0 0 12 8"><path d="M1 1.200 L6 6.200 L11 1.200" fill="none" stroke="#505050" stroke-width="2"/></svg>
</div>
<div class="a" id="hsb"><div class="a th"></div>
<svg class="a" style="left:6px;top:4px" width="8" height="12" viewBox="0 0 8 12"><path d="M6.800 1 L1.800 6 L6.800 11" fill="none" stroke="#505050" stroke-width="2"/></svg>
<svg class="a" style="left:1828px;top:4px" width="8" height="12" viewBox="0 0 8 12"><path d="M1.200 1 L6.200 6 L1.200 11" fill="none" stroke="#505050" stroke-width="2"/></svg>
</div>
<div class="a" id="sbcorner"></div>
<div class="a" id="frameb"></div>
<div class="a btn" id="bFilter"><span class="a t"><span style="letter-spacing:0.033px">Alle Objekte anzeigen</span></span>
<svg class="a" style="left:3px;top:1px" width="18" height="19" viewBox="0 0 18 19"><path d="M1.500 4 L16.500 4 L10.500 10.500 L10.500 16.500 L7.500 18 L7.500 10.500 Z" fill="#6f9fc8" stroke="#4f7fa8" stroke-width="1"/><rect x="1" y="1" width="16" height="3.400" rx="1" fill="#e8dd6a" stroke="#c9bc3f" stroke-width=".800"/></svg>
<svg class="a" style="left:150px;top:15px" width="8" height="5" viewBox="0 0 8 5"><path d="M0 0 L8 0 L4 4.500 Z" fill="#000"/></svg>
</div>
<svg class="a" style="left:1810px;top:895px" width="20" height="20" viewBox="0 0 20 20"><rect x="1.500" y="1.500" width="17" height="17" fill="#e8eef5" stroke="#b5c7dc" stroke-width="1"/><rect x="8" y="4" width="8" height="4.400" rx="1" fill="#fff" stroke="#7f9fc4" stroke-width="1"/><rect x="8" y="11.400" width="8" height="4.400" rx="1" fill="#fff" stroke="#7f9fc4" stroke-width="1"/><path d="M3.600 6.200 H7 M3.600 13.600 H7" stroke="#5a7aa0" stroke-width="1.400"/></svg>
<div class="a" id="viewbtn"><svg class="a" style="left:3px;top:3px" width="19" height="18" viewBox="0 0 19 18"><rect x="1.500" y="1.500" width="16" height="15" fill="#f4f8fc" stroke="#7f9fc4" stroke-width="1"/><rect x="1.500" y="1.500" width="16" height="3" fill="#9db8d8"/><path d="M1.500 7.600 H17.500 M1.500 10.600 H17.500 M1.500 13.600 H17.500 M6.500 4.500 V16.500" stroke="#7f9fc4" stroke-width="1"/></svg></div>
</div>
<svg class="a" id="anno" width="1919" height="1033" viewBox="0 0 1919 1033">
<g fill="none" stroke="#d4141e" stroke-width="3.400" stroke-linecap="round">
<path d="M190.500 178.500 C160 178 125 160 78 126"/>
<path d="M199.500 411 C190 370 165 345 120 308 C75 270 30 220 15.600 144"/>
<ellipse cx="1759.800" cy="258" rx="75.700" ry="112.900" stroke="#c41822" stroke-width="3"/>
</g>
<g fill="#ea1018" stroke="none">
<path d="M61.600 115.600 L87.200 122.400 L80 126.800 L80.400 134.400 Z"/>
<path d="M13.500 123 L22.200 148.400 L15.500 145.400 L8.600 149.800 Z"/>
</g>
</svg>
<div class="ylab" style="left:190px;top:161px;width:42px;height:39px;font-size:16px;line-height:36px">2</div>
<div class="ylab" style="left:184px;top:410px;width:44px;height:39px;font-size:16px;line-height:36px">3.</div>
<div class="ylab" style="left:1736px;top:375px;width:44px;height:39px;font-size:16px;line-height:36px;background:#ffff21">1.</div>
<div class="ylab" style="left:835px;top:916px;width:142px;height:45px;font-size:19.500px;font-weight:bold;line-height:39px;padding-right:3px;background:#ffff1c">Bild 3</div>

<div class="a" id="redT"></div><div class="a" id="redL"></div><div class="a" id="redR"></div><div class="a" id="redB"></div>
</body></html>
